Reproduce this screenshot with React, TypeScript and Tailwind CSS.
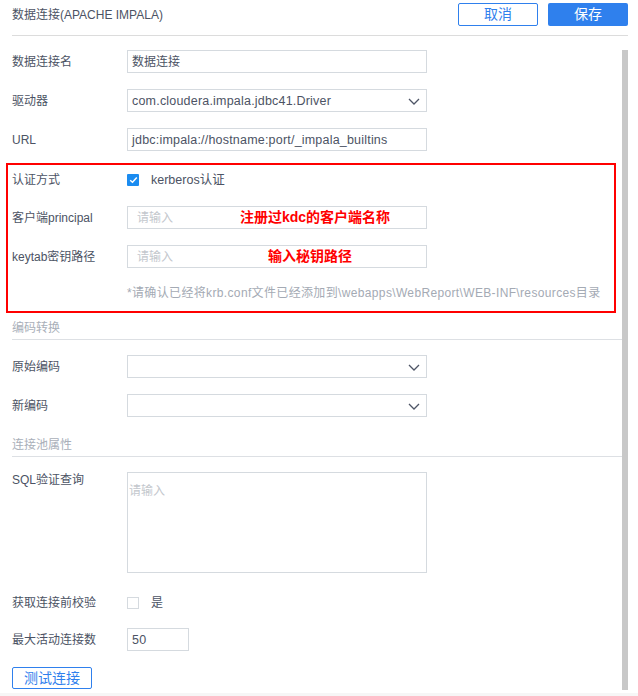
import React from "react";

const Chevron = () => (
  <svg width="12" height="7" viewBox="0 0 12 7" className="absolute right-[6px] top-[8px]">
    <polyline points="1,1 6,6 11,1" fill="none" stroke="#4e5566" strokeWidth="1.3" />
  </svg>
);

const Label = ({ children, top = true }: { children: React.ReactNode; top?: boolean }) => (
  <div className={`w-[115px] shrink-0 text-[12px] leading-[17px] ${top ? "pt-[2px]" : ""} text-[#4c5364] whitespace-nowrap`}>{children}</div>
);

const Row = ({ label, children }: { label: string; children: React.ReactNode }) => (
  <div className="flex items-center h-[23px] ml-[12px]">
    <Label>{label}</Label>
    {children}
  </div>
);

const Input = ({ value, placeholder, w = "w-[300px]", wide = false, children }: { value?: string; placeholder?: string; w?: string; wide?: boolean; children?: React.ReactNode }) => (
  <div className={`relative ${w} h-[23px] border border-[#d5dadf] flex items-center box-border`}>
    {value ? (
      <span className={`pl-[4px] pt-[1px] ${wide ? "text-[12.5px] tracking-[0.2px]" : "text-[12px]"} text-[#4c5364] whitespace-nowrap`}>{value}</span>
    ) : placeholder ? (
      <span className="pl-[9px] pt-[1px] text-[12px] text-[#c3c7cd]">{placeholder}</span>
    ) : null}
    {children}
  </div>
);

const Section = ({ title, cls }: { title: string; cls: string }) => (
  <div className={`ml-[12px] w-[610px] border-b border-[#dde0e4] pb-[3px] ${cls}`}>
    <div className="text-[12px] leading-[18px] text-[#a9afb9] translate-y-[1px]">{title}</div>
  </div>
);

export default function App() {
  return (
    <div className="relative w-[638px] h-[696px] bg-white overflow-hidden font-['Liberation_Sans','Noto_Sans_CJK_SC',sans-serif]">
      {/* header */}
      <div className="ml-[12px] w-[616px] h-[36px] border-b border-[#dcdcdc] flex justify-between items-start pt-[3px] box-border">
        <div className="h-[23px] flex items-center pt-[1px] text-[12px] text-[#4c5364]">数据连接(APACHE IMPALA)</div>
        <div className="flex gap-[10px]">
          <button className="w-[80px] h-[23px] border border-[#2f80ed] rounded-[2px] text-[14px] text-[#2f80ed] flex items-center justify-center bg-white">取消</button>
          <button className="w-[80px] h-[23px] rounded-[2px] text-[14px] text-white flex items-center justify-center bg-[#2f80ed]">保存</button>
        </div>
      </div>

      <div className="mt-[14px]">
        <Row label="数据连接名"><Input value="数据连接" /></Row>
      </div>
      <div className="mt-[16px]">
        <Row label="驱动器"><Input value="com.cloudera.impala.jdbc41.Driver" wide><Chevron /></Input></Row>
      </div>
      <div className="mt-[16px]">
        <Row label="URL"><Input value="jdbc:impala://hostname:port/_impala_builtins" wide /></Row>
      </div>

      {/* red box */}
      <div className="mt-[12px] ml-[6px] w-[610px] border-2 border-[#ff0000] pt-[3px] pb-[9px] pl-[4px] box-border">
        <div className="flex items-center h-[23px]">
          <Label>认证方式</Label>
          <div className="w-[12px] h-[12px] bg-[#1b8cf0] rounded-[1px] flex items-center justify-center">
            <svg width="9" height="8" viewBox="0 0 9 8">
              <polyline points="1.2,4.2 3.5,6.3 7.8,1.5" fill="none" stroke="white" strokeWidth="1.5" />
            </svg>
          </div>
          <span className="ml-[12px] pt-[1px] text-[12.5px] text-[#4c5364]">kerberos认证</span>
        </div>
        <div className="flex items-center h-[23px] mt-[15px]">
          <Label>客户端principal</Label>
          <Input placeholder="请输入">
            <span className="absolute left-[112px] top-[1px] text-[14px] leading-[19px] font-bold text-[#ff0000] whitespace-nowrap">注册过kdc的客户端名称</span>
          </Input>
        </div>
        <div className="flex items-center h-[23px] mt-[16px]">
          <Label>keytab密钥路径</Label>
          <Input placeholder="请输入">
            <span className="absolute left-[140px] top-[1px] text-[14px] leading-[19px] font-bold text-[#ff0000] whitespace-nowrap">输入秘钥路径</span>
          </Input>
        </div>
        <div className="mt-[16px] ml-[115px] text-[12px] leading-[18px] tracking-[0.35px] text-[#a4aab4] whitespace-nowrap">
          *请确认已经将krb.conf文件已经添加到\webapps\WebReport\WEB-INF\resources目录
        </div>
      </div>

      <Section title="编码转换" cls="pt-[5px]" />
      <div className="mt-[15px]">
        <Row label="原始编码"><Input><Chevron /></Input></Row>
      </div>
      <div className="mt-[16px]">
        <Row label="新编码"><Input><Chevron /></Input></Row>
      </div>

      <Section title="连接池属性" cls="mt-[18px]" />

      <div className="mt-[15px] ml-[12px] flex items-start">
        <Label top={false}>SQL验证查询</Label>
        <div className="w-[300px] h-[101px] border border-[#d5dadf] box-border pt-[5px] pl-[1px]">
          <span className="text-[12px] text-[#c3c7cd]">请输入</span>
        </div>
      </div>

      <div className="mt-[18px]">
        <Row label="获取连接前校验">
          <div className="w-[12px] h-[12px] border border-[#d5dadf] box-border bg-white" />
          <span className="ml-[12px] pt-[1px] text-[12px] text-[#4c5364]">是</span>
        </Row>
      </div>
      <div className="mt-[14px]">
        <Row label="最大活动连接数"><Input value="50" w="w-[62px]" wide /></Row>
      </div>

      <button className="mt-[16px] ml-[12px] w-[80px] h-[22px] border border-[#2f80ed] rounded-[2px] text-[14px] text-[#2f80ed] flex items-center justify-center bg-white">测试连接</button>

      <div className="mt-[4px] h-[10px] bg-[#f6f6f6]" />

      {/* scrollbar */}
      <div className="absolute left-[622px] top-[50px] w-[6px] h-[640px] bg-[#c8c8c8]" />
    </div>
  );
}
